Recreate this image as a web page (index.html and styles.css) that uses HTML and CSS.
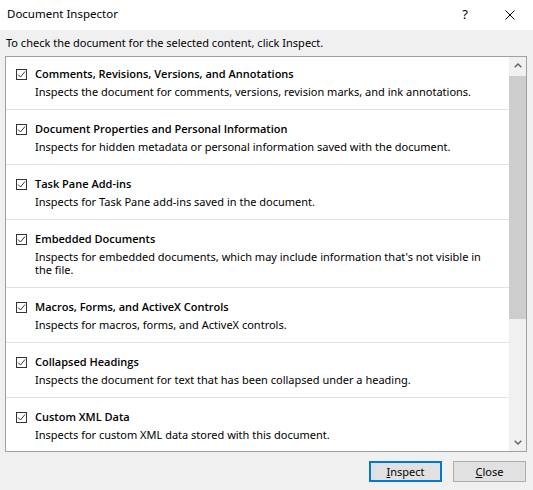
FILE: index.html
```html
<!DOCTYPE html>
<html lang="en">
<head>
<meta charset="utf-8">
<title>Document Inspector</title>
<link rel="stylesheet" href="styles.css">
</head>
<body>
<div class="dialog">
  <header class="titlebar">
    <span class="title">Document Inspector</span>
    <span class="help">?</span>
    <span class="close-x">
      <svg width="10" height="10" viewBox="0 0 10 10"><path d="M0.5 0.5 L9.5 9.5 M9.5 0.5 L0.5 9.5" stroke="#000" stroke-width="1" fill="none"/></svg>
    </span>
  </header>
  <p class="prompt">To check the document for the selected content, click Inspect.</p>
  <div class="listbox">
    <div class="items">
      <div class="item">
        <span class="check"><svg width="11" height="11" viewBox="0 0 11 11"><path d="M2 5.5 L4.5 8 L9 2.5" stroke="#333" stroke-width="1" fill="none"/></svg></span>
        <span class="name">Comments, Revisions, Versions, and Annotations</span>
        <span class="desc">Inspects the document for comments, versions, revision marks, and ink annotations.</span>
      </div>
      <div class="item">
        <span class="check"><svg width="11" height="11" viewBox="0 0 11 11"><path d="M2 5.5 L4.5 8 L9 2.5" stroke="#333" stroke-width="1" fill="none"/></svg></span>
        <span class="name">Document Properties and Personal Information</span>
        <span class="desc">Inspects for hidden metadata or personal information saved with the document.</span>
      </div>
      <div class="item">
        <span class="check"><svg width="11" height="11" viewBox="0 0 11 11"><path d="M2 5.5 L4.5 8 L9 2.5" stroke="#333" stroke-width="1" fill="none"/></svg></span>
        <span class="name">Task Pane Add-ins</span>
        <span class="desc">Inspects for Task Pane add-ins saved in the document.</span>
      </div>
      <div class="item">
        <span class="check"><svg width="11" height="11" viewBox="0 0 11 11"><path d="M2 5.5 L4.5 8 L9 2.5" stroke="#333" stroke-width="1" fill="none"/></svg></span>
        <span class="name">Embedded Documents</span>
        <span class="desc">Inspects for embedded documents, which may include information that's not visible in the file.</span>
      </div>
      <div class="item">
        <span class="check"><svg width="11" height="11" viewBox="0 0 11 11"><path d="M2 5.5 L4.5 8 L9 2.5" stroke="#333" stroke-width="1" fill="none"/></svg></span>
        <span class="name">Macros, Forms, and ActiveX Controls</span>
        <span class="desc">Inspects for macros, forms, and ActiveX controls.</span>
      </div>
      <div class="item">
        <span class="check"><svg width="11" height="11" viewBox="0 0 11 11"><path d="M2 5.5 L4.5 8 L9 2.5" stroke="#333" stroke-width="1" fill="none"/></svg></span>
        <span class="name">Collapsed Headings</span>
        <span class="desc">Inspects the document for text that has been collapsed under a heading.</span>
      </div>
      <div class="item">
        <span class="check"><svg width="11" height="11" viewBox="0 0 11 11"><path d="M2 5.5 L4.5 8 L9 2.5" stroke="#333" stroke-width="1" fill="none"/></svg></span>
        <span class="name">Custom XML Data</span>
        <span class="desc">Inspects for custom XML data stored with this document.</span>
      </div>
    </div>
    <div class="scrollbar">
      <div class="sb-btn">
        <svg width="8" height="5" viewBox="0 0 8 5"><path d="M0.7 4.3 L4 1 L7.3 4.3" stroke="#606060" stroke-width="1.4" fill="none"/></svg>
      </div>
      <div class="sb-track"><div class="sb-thumb"></div></div>
      <div class="sb-btn">
        <svg width="8" height="5" viewBox="0 0 8 5"><path d="M0.7 0.7 L4 4 L7.3 0.7" stroke="#606060" stroke-width="1.4" fill="none"/></svg>
      </div>
    </div>
  </div>
  <footer class="buttons">
    <button class="btn btn-default"><span class="key">I</span>nspect</button>
    <button class="btn"><span class="key">C</span>lose</button>
  </footer>
</div>
</body>
</html>
```

FILE: styles.css
```css
* { box-sizing: border-box; }

html, body {
  margin: 0;
  padding: 0;
}

body {
  width: 533px;
  height: 490px;
  background: #f0f0f0;
  font-family: "Noto Sans", "Open Sans", "Liberation Sans", sans-serif;
  font-size: 11px;
  color: #000;
  overflow: hidden;
}

.dialog {
  display: flex;
  flex-direction: column;
  height: 490px;
}

.titlebar {
  height: 30px;
  background: #fff;
  display: flex;
  align-items: center;
  padding: 0 18px 0 7px;
}

.title {
  flex: 1;
  font-size: 11.5px;
  line-height: 16px;
  padding-bottom: 2px;
}

.help {
  font-size: 13px;
  line-height: 16px;
  margin-right: 37px;
  padding-bottom: 3px;
}

.close-x {
  display: flex;
  width: 10px;
  height: 10px;
  margin-bottom: 1px;
}

.prompt {
  margin: 0;
  padding: 5px 6px 6px;
  line-height: 15px;
}

.listbox {
  height: 396px;
  margin: 0 6px 0 5px;
  border: 1px solid #a0a0a0;
  background: #fff;
  display: flex;
  overflow: hidden;
}

.items {
  flex: 1;
  min-width: 0;
  overflow: hidden;
}

.item {
  display: grid;
  grid-template-columns: 11px 1fr;
  column-gap: 8px;
  row-gap: 4px;
  padding: 11px 18px 11px 10px;
  border-top: 1px solid #e3e3e3;
}

.item:first-child {
  border-top: none;
  padding-top: 9px;
}

.check {
  grid-row: 1;
  grid-column: 1;
  width: 11px;
  height: 11px;
  margin-top: 3px;
  border: 1px solid #333;
  display: flex;
}

.check svg {
  margin: -1px;
  flex: none;
}

.name {
  grid-row: 1;
  grid-column: 2;
  font-family: "Open Sans", "Noto Sans", sans-serif;
  font-weight: 600;
  line-height: 15px;
}

.desc {
  grid-row: 2;
  grid-column: 2;
  line-height: 13px;
}

.scrollbar {
  width: 17px;
  flex: none;
  background: #f0f0f0;
  display: flex;
  flex-direction: column;
}

.sb-btn {
  height: 17px;
  display: flex;
  align-items: center;
  justify-content: center;
  flex: none;
}

.sb-track {
  flex: 1;
  padding-top: 2px;
}

.sb-thumb {
  height: 243px;
  background: #cdcdcd;
}

.buttons {
  display: flex;
  justify-content: flex-end;
  gap: 11px;
  padding: 9px 7px 0;
}

.btn {
  width: 73px;
  height: 21px;
  padding: 0;
  background: #e1e1e1;
  border: 1px solid #adadad;
  font-family: inherit;
  font-size: 11px;
  color: #000;
  line-height: 15px;
}

.btn-default {
  border: 2px solid #0078d7;
}

.key {
  text-decoration: underline;
}
```
